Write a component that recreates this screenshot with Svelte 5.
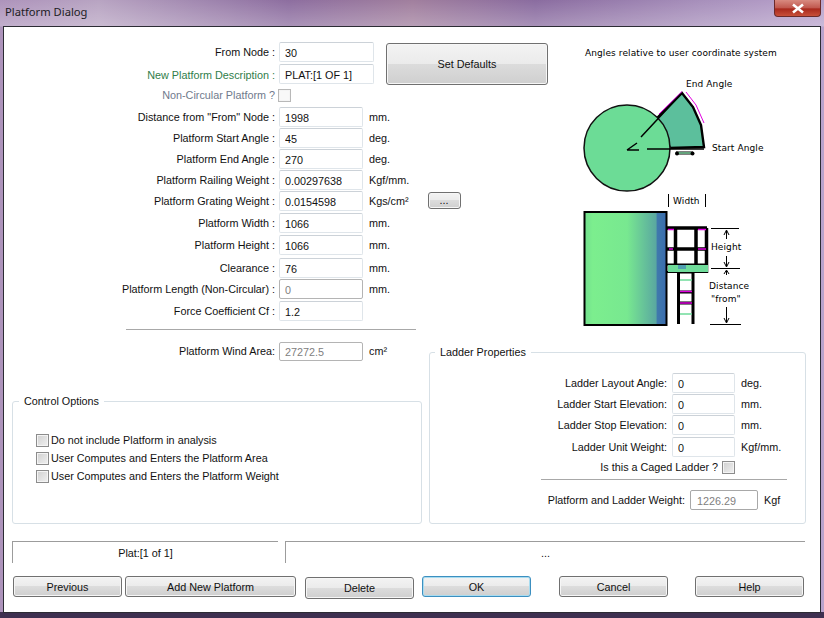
<script lang="ts">
  // h = row height, so the uneven dialog spacing stays in the data
  const fields = [
    { label: "From Node :", value: "30", h: 22, wide: true },
    { label: "New Platform Description :", value: "PLAT:[1 OF 1]", h: 23, wide: true, tone: "green" },
    { label: "Non-Circular Platform ?", check: true, h: 20, tone: "muted" },
    { label: 'Distance from "From" Node :', value: "1998", unit: "mm.", h: 21 },
    { label: "Platform Start Angle :", value: "45", unit: "deg.", h: 21 },
    { label: "Platform End Angle :", value: "270", unit: "deg.", h: 21 },
    { label: "Platform Railing Weight :", value: "0.00297638", unit: "Kgf/mm.", h: 21 },
    { label: "Platform Grating Weight :", value: "0.0154598", unit: "Kgs/cm²", h: 22, more: true },
    { label: "Platform Width :", value: "1066", unit: "mm.", h: 22 },
    { label: "Platform Height :", value: "1066", unit: "mm.", h: 23 },
    { label: "Clearance :", value: "76", unit: "mm.", h: 21 },
    { label: "Platform Length (Non-Circular) :", value: "0", unit: "mm.", h: 22, off: true },
    { label: "Force Coefficient Cf :", value: "1.2", h: 21 }
  ];

  const ladder = [
    { label: "Ladder Layout Angle:", value: "0", unit: "deg.", h: 21 },
    { label: "Ladder Start Elevation:", value: "0", unit: "mm.", h: 21 },
    { label: "Ladder Stop Elevation:", value: "0", unit: "mm.", h: 22 },
    { label: "Ladder Unit Weight:", value: "0", unit: "Kgf/mm.", h: 22 }
  ];

  const options = [
    "Do not include Platform in analysis",
    "User Computes and Enters the Platform Area",
    "User Computes and Enters the Platform Weight"
  ];
</script>

<div class="window">
  <header class="titlebar">
    <span class="title">Platform Dialog</span>
    <button class="close" aria-label="Close">
      <svg width="14" height="11" viewBox="0 0 14 11"><path d="M2 1.5 L12 9.5 M12 1.5 L2 9.5" stroke="#fff" stroke-width="2.6" /></svg>
    </button>
  </header>

  <main class="client">
    <section class="top">
      <div class="fields">
        {#each fields as f}
          <div class="row" style="height:{f.h}px">
            <span class="label {f.tone ?? ''}">{f.label}</span>
            {#if f.check}
              <span class="check faded"></span>
            {:else}
              <input class="input" class:wide={f.wide} class:off={f.off} value={f.value} readonly />
              {#if f.unit}<span class="unit">{f.unit}</span>{/if}
              {#if f.more}<button class="btn more">...</button>{/if}
            {/if}
          </div>
        {/each}
      </div>

      <button class="btn defaults">Set Defaults</button>

      <svg class="diagram" width="230" height="284" viewBox="570 41 230 284">
        <defs>
          <linearGradient id="tank" x1="0" x2="1" y1="0" y2="0">
            <stop offset="0" stop-color="#72e08e" />
            <stop offset="0.1" stop-color="#7cee8e" />
            <stop offset="0.52" stop-color="#78e890" />
            <stop offset="0.87" stop-color="#5aa8a0" />
            <stop offset="0.89" stop-color="#3f78ac" />
            <stop offset="1" stop-color="#3a6cae" />
          </linearGradient>
        </defs>
        <g class="hand">
          <text x="585" y="55">Angles relative to user coordinate system</text>
          <text x="686" y="86">End Angle</text>
          <text x="712" y="150">Start Angle</text>
        </g>

        <!-- plan view -->
        <path d="M657 117 L682 92 L693 106 L701 124 L704 146 L670 147 Z" fill="#5cbf9c" stroke="#000" stroke-width="2.4" />
        <path d="M659 113 L682 90.500 M686 91 L696 104 L704 122" fill="none" stroke="#e000e0" stroke-width="1" />
        <circle cx="627" cy="147" r="43" fill="#6cdc96" stroke="#111" stroke-width="1.5" />
        <path d="M641 136 L681 93 M627 149 L637 142 M627 149 L639 149 M647 148 L704 148" stroke="#000" stroke-width="1.5" fill="none" />
        <path d="M676 152 L693 152" stroke="#000" stroke-width="3" />
        <path d="M678 152 L691 152" stroke="#8fe8b0" stroke-width="1.4" />
        <circle cx="677" cy="152.500" r="2" /><circle cx="692.500" cy="152.500" r="2" />

        <!-- side view -->
        <path d="M668.500 193 V206 M705.500 193 V206" stroke="#000" stroke-width="1" />
        <text class="hand" x="673" y="203">Width</text>
        <rect x="584.500" y="211" width="82" height="113" fill="url(#tank)" stroke="#000" stroke-width="2" />
        <g fill="none" stroke="#000">
          <path d="M667 227 H707" stroke-width="3.500" />
          <path d="M667 248 H707" stroke-width="3.500" />
          <path d="M675.500 227 V263 M696 227 V263 M706.500 227 V272" stroke-width="3.500" />
          <path d="M667 263.500 H708 M667 271 H708" stroke-width="2" />
          <path d="M678.500 265 V323 M693 265 V323" stroke-width="3" />
          <path d="M680 271 H692" stroke-width="3" />
        </g>
        <rect x="668" y="264" width="40" height="7" fill="#6fdc9a" />
        <rect x="678" y="264" width="8" height="4" fill="#4f9fb0" />
        <path d="M668 228.500 H674 M698 228.500 H706 M669 248 H673 M698 248 H706" stroke="#e000e0" stroke-width="1.400" />
        <path d="M680 279 H692 M680 313 H692" stroke="#6fdc9a" stroke-width="1.500" />
        <path d="M680 291 H692 M680 302 H692" stroke="#000" stroke-width="3" />
        <path d="M680 290.500 H692 M680 302 H692" stroke="#e000e0" stroke-width="1.500" />
        <path d="M711 227.500 H739 M711 267.500 H740 M710 323.500 H741" stroke="#000" />
        <path d="M726.500 230 V238 M726.500 255 V265 M726.500 270 V274 M726.500 306 V321" stroke="#000" />
        <path d="M724 234 L726.500 229 L729 234 M724 261 L726.500 266 L729 261 M724 273 L726.500 269 L729 273 M724 317 L726.500 322 L729 317" fill="none" stroke="#000" />
        <g class="hand">
          <text x="711" y="249">Height</text>
          <text x="709" y="288">Distance</text>
          <text x="711" y="301">"from"</text>
        </g>
      </svg>
    </section>

    <hr class="rule main-rule" />

    <section class="lower">
      <div class="lower-left">
        <div class="row wind">
          <span class="label">Platform Wind Area:</span>
          <input class="input off dark" value="27272.5" readonly />
          <span class="unit">cm²</span>
        </div>
        <fieldset class="group control">
          <legend>Control Options</legend>
          {#each options as opt}
            <label class="option"><span class="check"></span>{opt}</label>
          {/each}
        </fieldset>
      </div>

      <fieldset class="group props">
        <legend>Ladder Properties</legend>
        {#each ladder as l}
          <div class="row ladder" style="height:{l.h}px">
            <span class="label">{l.label}</span>
            <input class="input short" value={l.value} readonly />
            <span class="unit">{l.unit}</span>
          </div>
        {/each}
        <div class="row caged">
          <span class="label">Is this a Caged Ladder ?</span>
          <span class="check"></span>
        </div>
        <hr class="rule ladder-rule" />
        <div class="row total">
          <span class="label">Platform and Ladder Weight:</span>
          <input class="input off dark tiny" value="1226.29" readonly />
          <span class="unit">Kgf</span>
        </div>
      </fieldset>
    </section>

    <section class="status">
      <div class="cell first">Plat:[1 of 1]</div>
      <div class="cell second">...</div>
    </section>

    <footer class="actions">
      <button class="btn w109">Previous</button>
      <button class="btn add">Add New Platform</button>
      <button class="btn w109 delete">Delete</button>
      <button class="btn w109 ok">OK</button>
      <button class="btn w109 cancel">Cancel</button>
      <button class="btn w109 help">Help</button>
    </footer>
  </main>
</div>

<style>
  :global(body) {
    margin: 0;
    overflow: hidden;
  }

  .window {
    box-sizing: border-box;
    width: 824px;
    height: 618px;
    padding: 0 3px 5px 3px;
    display: flex;
    flex-direction: column;
    font-family: "Liberation Sans", sans-serif;
    font-size: 10.8px;
    color: #111;
    background:
      linear-gradient(180deg, rgba(60, 40, 80, 0) 99%, #3e3050 99%),
      linear-gradient(180deg, rgba(255, 255, 255, 0) 0, rgba(255, 255, 255, 0.25) 26px, rgba(255, 255, 255, 0) 27px),
      linear-gradient(90deg, #ad93bb 0%, #b8a4c2 12%, #8d6ea0 35%, #a17f9e 50%, #8a6ca0 65%, #a78fbb 85%, #b9a3cc 100%);
  }

  .titlebar {
    height: 26px;
    flex: none;
    position: relative;
  }

  .title {
    position: absolute;
    left: 2px;
    top: 4px;
    font-family: "Noto Sans", sans-serif;
    font-size: 11.2px;
    color: #1c1c24;
  }

  .close {
    position: absolute;
    right: 0;
    top: 0;
    width: 47px;
    height: 17px;
    padding: 0;
    border: 1px solid #6b2a2a;
    border-top: 0;
    border-radius: 0 0 4px 4px;
    background: linear-gradient(180deg, #d88a80 0%, #c0574d 50%, #a8281c 55%, #c8503a 100%);
    display: flex;
    align-items: center;
    justify-content: center;
  }

  .client {
    flex: 1;
    min-height: 0;
    background: #fff;
    border: 1px solid #2c2c34;
    position: relative;
    box-sizing: border-box;
  }

  .top {
    display: flex;
    align-items: flex-start;
    padding-top: 15px;
  }

  .fields {
    width: 370px;
    flex: none;
  }

  .row {
    display: flex;
    align-items: flex-start;
  }

  .label {
    width: 271px;
    flex: none;
    text-align: right;
    padding-top: 4px;
    white-space: nowrap;
  }

  .label.green {
    color: #2f7d4a;
    padding-top: 5px;
  }

  .label.muted {
    color: #6f7a8c;
    padding-top: 2px;
  }

  .input {
    box-sizing: border-box;
    width: 84px;
    height: 20px;
    margin: 0 0 0 4px;
    padding: 1px 5px 0;
    flex: none;
    border: 1px solid #dfe5ea;
    border-top-color: #ccd2d8;
    border-radius: 2px;
    font: inherit;
    color: #111;
    background: #fff;
    outline: none;
  }

  .input.wide {
    width: 95px;
  }

  .input.off {
    color: #808080;
    border-color: #b4b4b4;
  }

  .input.short {
    width: 63px;
  }

  .input.tiny {
    width: 68px;
    padding-left: 6px;
  }

  .unit {
    padding: 4px 0 0 6px;
    white-space: nowrap;
  }

  .check {
    box-sizing: border-box;
    width: 13px;
    height: 13px;
    flex: none;
    border: 1px solid #8c8c8c;
    box-shadow: inset 0 0 0 1px #f4f4f4;
    background: linear-gradient(135deg, #d0d0d0, #f0f0f0);
  }

  .check.faded {
    margin: 2px 0 0 3px;
    border-color: #b8b8b8;
    background: #f8f8f8;
  }

  .btn {
    box-sizing: border-box;
    padding: 0;
    border: 1px solid #707070;
    border-radius: 3px;
    font: inherit;
    color: #111;
    background: linear-gradient(180deg, #f3f3f3 0%, #ebebeb 49%, #dcdcdc 50%, #cfcfcf 100%);
    box-shadow: inset 0 0 0 1px #f6f6f6;
  }

  .btn.defaults {
    width: 162px;
    height: 42px;
    margin: 1px 0 0 12px;
    flex: none;
  }

  .btn.more {
    width: 33px;
    height: 17px;
    margin: 1px 0 0 19px;
    line-height: 1;
    flex: none;
  }

  .diagram {
    flex: none;
    margin: 0 0 0 22px;
    display: block;
  }

  .hand,
  .diagram text {
    font-family: "DejaVu Sans", sans-serif;
    font-size: 9px;
    letter-spacing: 0.1px;
    fill: #000;
  }

  .rule {
    border: 0;
    height: 1px;
    background: #a8a8a8;
    margin: 0;
  }

  .main-rule {
    width: 290px;
    margin: 3px 0 0 122px;
  }

  .lower {
    display: flex;
    align-items: flex-start;
  }

  .lower-left {
    width: 425px;
    flex: none;
  }

  .wind {
    height: 19px;
    margin-top: 12px;
  }

  .wind .label,
  .wind .unit {
    padding-top: 3px;
  }

  .wind .input {
    height: 19px;
    padding-top: 0;
  }

  .group {
    box-sizing: border-box;
    margin: 0;
    padding: 0;
    border: 1px solid #d7e0e6;
    border-radius: 3px;
    min-inline-size: 0;
  }

  .group legend {
    padding: 0 5px;
    margin-left: 5px;
  }

  .control {
    width: 410px;
    height: 129px;
    margin: 34px 0 0 8px;
    padding: 24px 0 0 23px;
  }

  .control legend {
    margin-left: -17px;
  }

  .option {
    display: flex;
    align-items: center;
    gap: 2px;
    height: 18px;
  }

  .props {
    width: 377px;
    height: 178px;
    margin-top: 16px;
    margin-left: 0;
    padding-top: 15px;
  }

  .ladder .label {
    width: 237px;
  }

  .ladder .input {
    margin-left: 5px;
  }

  .caged {
    height: 19px;
    padding-left: 0;
  }

  .caged .label {
    width: 288px;
    padding-top: 2px;
  }

  .caged .check {
    margin: 2px 0 0 4px;
  }

  .ladder-rule {
    width: 246px;
    margin: 1px 0 0 111px;
  }

  .total {
    margin-top: 10px;
  }

  .total .label {
    width: 255px;
  }

  .total .input {
    margin-left: 5px;
    border-color: #a8a8a8;
  }

  .status {
    display: flex;
    height: 22px;
    margin: 17px 0 0 8px;
    gap: 7px;
  }

  .cell {
    box-sizing: border-box;
    border-top: 1px solid #9c9c9c;
    border-left: 1px solid #9c9c9c;
    text-align: center;
    padding-top: 5px;
  }

  .first {
    width: 266px;
  }

  .second {
    width: 520px;
  }

  .actions {
    display: flex;
    align-items: flex-start;
    height: 21px;
    margin: 13px 0 0 9px;
  }

  .w109 {
    width: 109px;
    height: 21px;
  }

  .add {
    width: 171px;
    height: 21px;
    margin-left: 3px;
  }

  .delete {
    height: 22px;
    margin: 1px 0 0 9px;
  }

  .ok {
    margin-left: 8px;
    border-color: #3c8fc0;
    box-shadow: inset 0 0 0 1px #a8dcf0;
  }

  .cancel {
    margin-left: 28px;
  }

  .help {
    margin-left: 27px;
  }
</style>
